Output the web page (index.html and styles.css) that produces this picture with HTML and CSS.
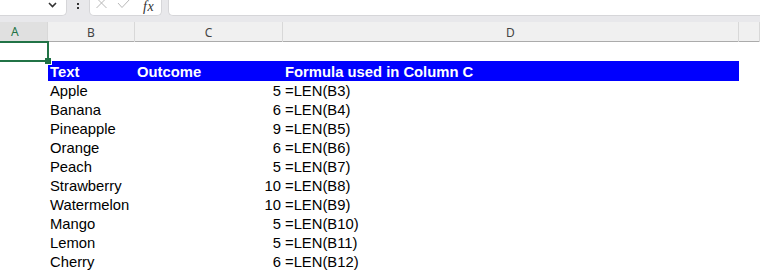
FILE: index.html
```html
<!DOCTYPE html>
<html>
<head>
<meta charset="utf-8">
<link rel="stylesheet" href="styles.css">
</head>
<body>
<div class="toolbar">
  <div class="namebox">
    <svg class="chev" width="9" height="6" viewBox="0 0 9 6"><path d="M1 1 L4.5 4.5 L8 1" fill="none" stroke="#333" stroke-width="1.6"/></svg>
  </div>
  <div class="dots"><span></span><span></span></div>
  <div class="fxbox">
    <svg class="ico" width="13" height="9" viewBox="0 0 13 9"><path d="M1.5 -2 L11.5 8 M11.5 -2 L1.5 8" fill="none" stroke="#b8b8b8" stroke-width="1"/></svg>
    <svg class="ico" width="14" height="9" viewBox="0 0 14 9"><path d="M1 3 L5 7.5 L13 -1" fill="none" stroke="#b8b8b8" stroke-width="1"/></svg>
    <span class="fx">fx</span>
  </div>
  <div class="formula"></div>
</div>
<div class="sheet">
  <div class="row colhead">
    <div class="ch sel">A</div>
    <div class="ch">B</div>
    <div class="ch">C</div>
    <div class="ch">D</div>
    <div class="ch"></div>
  </div>
  <div class="row">
    <div class="cell active"></div>
    <div class="cell"></div><div class="cell"></div><div class="cell"></div><div class="cell"></div>
  </div>
  <div class="row head">
    <div class="cell"></div>
    <div class="cell hb">Text</div>
    <div class="cell hb">Outcome</div>
    <div class="cell hb">Formula used in Column C</div>
    <div class="cell"></div>
  </div>
  <div class="row"><div class="cell"></div><div class="cell">Apple</div><div class="cell num">5</div><div class="cell">=LEN(B3)</div><div class="cell"></div></div>
  <div class="row"><div class="cell"></div><div class="cell">Banana</div><div class="cell num">6</div><div class="cell">=LEN(B4)</div><div class="cell"></div></div>
  <div class="row"><div class="cell"></div><div class="cell">Pineapple</div><div class="cell num">9</div><div class="cell">=LEN(B5)</div><div class="cell"></div></div>
  <div class="row"><div class="cell"></div><div class="cell">Orange</div><div class="cell num">6</div><div class="cell">=LEN(B6)</div><div class="cell"></div></div>
  <div class="row"><div class="cell"></div><div class="cell">Peach</div><div class="cell num">5</div><div class="cell">=LEN(B7)</div><div class="cell"></div></div>
  <div class="row"><div class="cell"></div><div class="cell">Strawberry</div><div class="cell num">10</div><div class="cell">=LEN(B8)</div><div class="cell"></div></div>
  <div class="row"><div class="cell"></div><div class="cell">Watermelon</div><div class="cell num">10</div><div class="cell">=LEN(B9)</div><div class="cell"></div></div>
  <div class="row"><div class="cell"></div><div class="cell">Mango</div><div class="cell num">5</div><div class="cell">=LEN(B10)</div><div class="cell"></div></div>
  <div class="row"><div class="cell"></div><div class="cell">Lemon</div><div class="cell num">5</div><div class="cell">=LEN(B11)</div><div class="cell"></div></div>
  <div class="row"><div class="cell"></div><div class="cell">Cherry</div><div class="cell num">6</div><div class="cell">=LEN(B12)</div><div class="cell"></div></div>
</div>
</body>
</html>
```
FILE: styles.css
```css
* { box-sizing: border-box; }
html, body { margin: 0; padding: 0; background: #fff; overflow: hidden; }
body { width: 760px; height: 275px; }

.toolbar {
  height: 22px;
  background: #e8e8eb;
  display: flex;
  align-items: flex-start;
}
.namebox {
  width: 67px;
  height: 16px;
  background: #fff;
  border: 1px solid #d6d6d9;
  border-top: none;
  border-left: none;
  border-radius: 0 0 5px 0;
  display: flex;
  justify-content: flex-end;
  padding: 2px 9px 0 0;
}
.chev { display: block; }
.dots {
  width: 22px;
  display: flex;
  flex-direction: column;
  align-items: center;
  gap: 2px;
  padding-top: 3px;
}
.dots span { width: 2px; height: 2px; background: #333; display: block; }
.fxbox {
  width: 73px;
  height: 16px;
  background: #fff;
  border: 1px solid #d6d6d9;
  border-top: none;
  border-radius: 0 0 5px 5px;
  display: flex;
  align-items: flex-start;
  padding-left: 5px;
  gap: 9px;
}
.ico { display: block; margin-top: 0; }
.fx {
  font-family: "Liberation Serif", serif;
  font-style: italic;
  font-size: 14px;
  line-height: 13px;
  color: #333;
  margin-left: 3px;
  letter-spacing: 0.5px;
}
.formula {
  flex: 1;
  margin-left: 6px;
  height: 16px;
  background: #fff;
  border: 1px solid #d6d6d9;
  border-top: none;
  border-right: none;
  border-radius: 0 0 0 5px;
}

.sheet {
  font-family: "Liberation Sans", Arial, sans-serif;
  font-size: 14.8px;
  color: #000;
}
.row {
  display: grid;
  grid-template-columns: 48px 87px 148px 456px 21px;
  height: 19px;
}
.colhead {
  height: 20px;
  background: #f0f0f0;
  border-bottom: 1px solid #ababab;
  font-family: "Noto Sans", "Open Sans", sans-serif;
  font-size: 12px;
  color: #444;
}
.ch {
  border-right: 1px solid #d8d8d8;
  display: flex;
  align-items: center;
  justify-content: center;
  line-height: 19px;
}
.ch.sel {
  background: #e0e0e0;
  color: #217346;
  justify-content: flex-start;
  padding-left: 11px;
  border-bottom: 2px solid #217346;
  margin-bottom: -1px;
}
.cell {
  display: flex;
  align-items: flex-end;
  line-height: 16px;
  padding: 0 2px;
  white-space: nowrap;
}
.num { justify-content: flex-end; }
.head .hb {
  background: #0000ff;
  color: #fff;
  font-weight: bold;
  box-shadow: 0 1px 0 #0000ff;
}
.active { position: relative; z-index: 2; }
.active::after {
  content: "";
  position: absolute;
  left: -3px;
  top: -1px;
  right: -1px;
  bottom: -1px;
  border: 2px solid #217346;
}
.active::before {
  content: "";
  position: absolute;
  left: 45px;
  top: 16px;
  width: 6px;
  height: 6px;
  background: #217346;
  box-shadow: 1px 1px 0 #fff;
  z-index: 3;
}
```
